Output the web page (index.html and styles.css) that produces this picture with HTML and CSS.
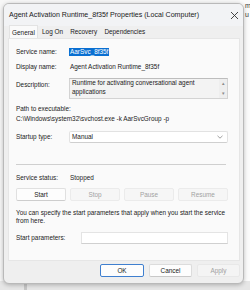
FILE: index.html
```html
<!DOCTYPE html>
<html>
<head>
<meta charset="utf-8">
<link rel="stylesheet" href="styles.css">
</head>
<body>
<div class="behind">
  <span class="behind-text">m</span>
  <span class="behind-text">u</span>
</div>
<div class="behind-bottom"><div class="strip"></div></div>
<div class="dialog">
  <div class="titlebar">
    <span class="title">Agent Activation Runtime_8f35f Properties (Local Computer)</span>
    <svg class="close" width="9" height="9" viewBox="0 0 9 9"><path d="M1 1L8 8M8 1L1 8" stroke="#333" stroke-width="0.9" fill="none"/></svg>
  </div>
  <div class="tabs">
    <span class="tab active">General</span>
    <span class="tab">Log On</span>
    <span class="tab">Recovery</span>
    <span class="tab">Dependencies</span>
  </div>
  <div class="panel">
    <div class="row r1"><span class="label">Service name:</span><span class="sel">AarSvc_8f35f</span></div>
    <div class="row r2"><span class="label">Display name:</span><span class="val">Agent Activation Runtime_8f35f</span></div>
    <div class="row r3"><span class="label lbl-desc">Description:</span>
      <div class="desc">
        <div class="desc-text">Runtime for activating conversational agent applications</div>
        <div class="scroll"><span class="arr">&#9652;</span><span class="arr">&#9662;</span></div>
      </div>
    </div>
    <div class="line r4">Path to executable:</div>
    <div class="line r5">C:\Windows\system32\svchost.exe -k AarSvcGroup -p</div>
    <div class="row r6"><span class="label">Startup type:</span>
      <div class="combo"><span>Manual</span><svg width="6" height="4" viewBox="0 0 6 4"><path d="M0.5 0.8L3 3.2L5.5 0.8" stroke="#777" stroke-width="0.7" fill="none"/></svg></div>
    </div>
    <div class="sep"></div>
    <div class="row r7"><span class="label">Service status:</span><span class="val">Stopped</span></div>
    <div class="btns">
      <span class="btn">Start</span>
      <span class="btn dis">Stop</span>
      <span class="btn dis">Pause</span>
      <span class="btn dis">Resume</span>
    </div>
    <div class="note">You can specify the start parameters that apply when you start the service from here.</div>
    <div class="row r10"><span class="label wide">Start parameters:</span><div class="input"></div></div>
  </div>
  <div class="footer">
    <span class="fbtn ok">OK</span>
    <span class="fbtn">Cancel</span>
    <span class="fbtn dis">Apply</span>
  </div>
</div>
</body>
</html>
```
FILE: styles.css
```css
html, body {
  margin: 0;
  padding: 0;
}
body {
  width: 250px;
  height: 290px;
  overflow: hidden;
  position: relative;
  background: #f7f7f7;
  font-family: "Liberation Sans", Arial, sans-serif;
  font-size: 6.4px;
  line-height: 8px;
  color: #1a1a1a;
}
.behind {
  position: absolute;
  left: 240px;
  top: 0;
  width: 10px;
  height: 283px;
  background: #fbfbfb;
  display: flex;
  flex-direction: column;
  padding-left: 5px;
  box-sizing: border-box;
  font-size: 7px;
  line-height: 9px;
  color: #333;
}
.behind-text:first-child { margin-top: 1px; }
.behind-bottom {
  position: absolute;
  left: 0;
  top: 281px;
  width: 250px;
  height: 9px;
  background: #e6e6e6;
}
.strip {
  margin-left: 24px;
  width: 3px;
  height: 9px;
  background: #c6c6c6;
}
.dialog {
  position: absolute;
  left: 3px;
  top: 3px;
  width: 241px;
  height: 281px;
  box-sizing: border-box;
  border: 1px solid #b9b9b9;
  border-radius: 6px;
  background: #efefef;
  box-shadow: 0 1px 4px rgba(0,0,0,0.25);
  display: flex;
  flex-direction: column;
  overflow: hidden;
}
.titlebar {
  height: 22px;
  display: flex;
  align-items: center;
  justify-content: space-between;
  padding: 0 4px 0 5px;
  background: #f2f3f5;
}
.title {
  font-size: 7.1px;
  color: #1a1a1a;
}
.tabs {
  display: flex;
  align-items: flex-end;
  height: 12px;
  padding-left: 4.5px;
}
.tab {
  padding: 0 3.6px;
  height: 12px;
  line-height: 12px;
  color: #1a1a1a;
}
.tab.active {
  background: #fafafa;
  border: 1px solid #e3e3e3;
  border-bottom: none;
  height: 13px;
  line-height: 13px;
  box-sizing: border-box;
  padding: 0 2.6px;
}
.panel {
  margin: 0 3px 0 4px;
  height: 223px;
  box-sizing: border-box;
  background: #fafafa;
  border: 1px solid #e6e6e6;
  padding: 7px 11px 0 7px;
  display: flex;
  flex-direction: column;
}
.row {
  display: flex;
  align-items: center;
  height: 12px;
}
.label {
  width: 53px;
  flex: none;
}
.label.wide { width: 65px; }
.sel {
  background: #0a6fd1;
  color: #fff;
  padding: 0 1px;
  line-height: 8px;
}
.val { padding-left: 1px; }
.r2 { margin-top: 3px; }
.r3 {
  margin-top: 5px;
  height: 21px;
  align-items: flex-start;
}
.lbl-desc { padding-top: 3px; }
.desc {
  flex: 1;
  height: 21px;
  box-sizing: border-box;
  border: 1px solid #d3d3d3;
  border-top-color: #bdbdbd;
  background: #f3f3f3;
  display: flex;
}
.desc-text {
  flex: 1;
  padding: 0 0 0 2px;
  line-height: 8.5px;
}
.scroll {
  width: 8px;
  display: flex;
  flex-direction: column;
  justify-content: space-around;
  align-items: center;
  background: #eeeeee;
  font-size: 5px;
  color: #8a8a8a;
  line-height: 5px;
}
.line {
  line-height: 10px;
  height: 10px;
}
.r4 { margin-top: 5px; }
.r6 { margin-top: 7px; }
.combo {
  flex: 1;
  height: 12px;
  box-sizing: border-box;
  border: 1px solid #e2e2e2;
  border-bottom-color: #cfcfcf;
  background: #fff;
  border-radius: 2px;
  display: flex;
  align-items: center;
  justify-content: space-between;
  padding: 0 4px 0 2px;
}
.sep {
  margin-top: 21px;
  height: 1px;
  background: #cfcfcf;
  margin-right: 2px;
}
.r7 { margin-top: 7px; }
.btns {
  margin-top: 4px;
  display: flex;
  gap: 4px;
  height: 13px;
}
.btn {
  flex: 1;
  box-sizing: border-box;
  border: 1px solid #e0e0e0;
  border-bottom-color: #cdcdcd;
  border-radius: 2px;
  background: #fdfdfd;
  display: flex;
  align-items: center;
  justify-content: center;
}
.btn.dis {
  background: #f6f6f6;
  color: #a2a2a2;
  border-color: #ebebeb;
}
.note {
  margin-top: 8px;
  line-height: 8px;
  margin-right: -2px;
}
.r10 { margin-top: 7px; }
.input {
  flex: 1;
  height: 12px;
  box-sizing: border-box;
  border: 1px solid #e4e4e4;
  border-bottom-color: #d0d0d0;
  background: #fff;
}
.footer {
  display: flex;
  justify-content: flex-end;
  gap: 5px;
  padding: 3px 3px 0 0;
}
.fbtn {
  width: 43px;
  height: 13px;
  box-sizing: border-box;
  border: 1px solid #dcdcdc;
  border-bottom-color: #c8c8c8;
  border-radius: 2px;
  background: #fdfdfd;
  display: flex;
  align-items: center;
  justify-content: center;
}
.fbtn.ok {
  width: 44px;
  border: 1px solid #3f7fcf;
}
.fbtn.dis {
  background: #f4f4f4;
  color: #a0a0a0;
  border-color: #e8e8e8;
}
```
